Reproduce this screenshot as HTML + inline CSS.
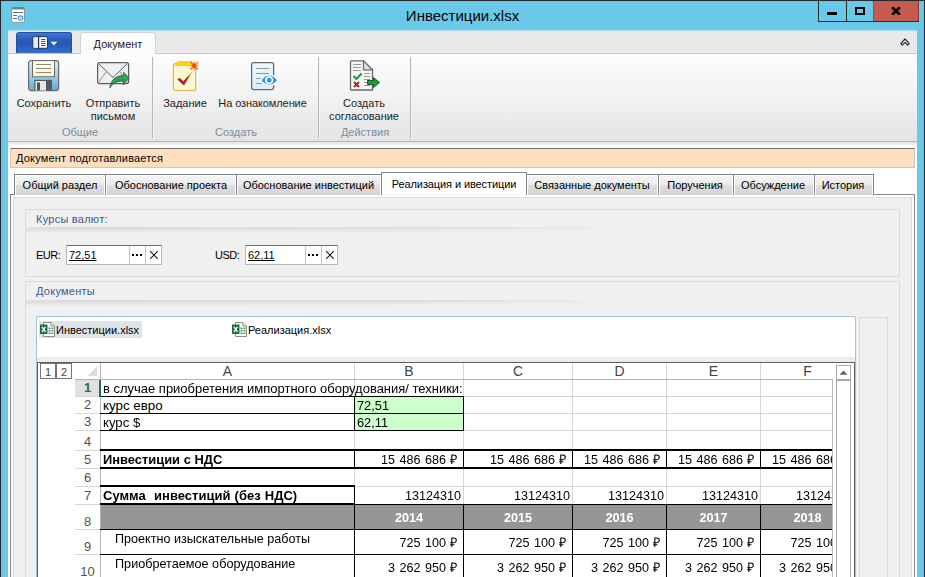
<!DOCTYPE html>
<html lang="ru">
<head>
<meta charset="utf-8">
<title>Инвестиции.xlsx</title>
<style>
*{box-sizing:border-box;margin:0;padding:0}
html,body{width:925px;height:577px;overflow:hidden}
body{position:relative;background:#6ac9e9;font-family:"Liberation Sans",sans-serif;font-size:11px;color:#1e1e1e}
.abs{position:absolute}
#frameT{left:0;top:0;width:925px;height:1px;background:#23282c}
#frameL{left:0;top:0;width:1px;height:577px;background:#23282c}
#frameR{left:924px;top:0;width:1px;height:577px;background:#23282c}
#title{left:0;top:6px;width:925px;text-align:center;font-size:15px;line-height:20px;color:#000}
#ctl{left:818px;top:0;height:22px;width:101px;border:1px solid #2b2b2b;border-top:none;border-right:none;display:flex}
#ctl div{height:21px;position:relative}
#client{left:8px;top:31px;width:909px;height:546px;background:#fff;overflow:hidden}
#tabstrip{left:0;top:0;width:909px;height:23px;background:#e9e9e9;border-bottom:1px solid #c6c6c6}
#appbtn{left:8px;top:1px;width:56px;height:21px;border-radius:3px 3px 0 0;background:linear-gradient(#4377d3,#2c5fbc 30%,#2858b6 55%,#3570cc);border:1px solid #2450a4;border-bottom:none}
#doctab{left:72px;top:1px;width:76px;height:23px;background:#fbfbfb;border:1px solid #d2d2d2;border-bottom:none;border-radius:3px 3px 0 0;text-align:center;line-height:22px}
#ribbon{left:0;top:23px;width:909px;height:88px;background:linear-gradient(#fdfdfd,#f3f3f3 45%,#e4e4e4);border-bottom:1px solid #b6b6b6}
#ribsh{left:0;top:111px;width:909px;height:4px;background:linear-gradient(#e2e2e2,#fff)}
.rsep{top:3px;width:1px;height:81px;background:#b8b8b8;box-shadow:1px 0 0 #f4f4f4}
.rbtn{top:43px;text-align:center;line-height:13px;white-space:nowrap;transform:translateX(-50%)}
.rgrp{top:72px;color:#7c8da5;transform:translateX(-50%);white-space:nowrap;line-height:13px}

#status{left:10px;top:148px;width:905px;height:20px;background:#fddfc0;border:1px solid #c8c8c8;border-top-color:#707070;line-height:18px;padding-left:5px;color:#000;letter-spacing:.17px}
.tab{top:174px;height:21px;border:1px solid #84848c;border-bottom:none;background:linear-gradient(#f5f5f5,#ececec 47%,#dedede 53%,#d4d4d4);box-shadow:inset 1px 1px 0 #fff,inset -1px 0 0 #fff;line-height:21px;text-align:center;white-space:nowrap;color:#000}
.tab.act{top:172px;height:23px;background:#fff;line-height:23px;z-index:3;box-shadow:none}
#panel{left:10px;top:194px;width:905px;height:400px;border:1px solid #85858d;background:#fff}
#panel2{left:13px;top:197px;width:899px;height:400px;border:1px solid #d3dde6;background:#f0f0f0}
.gbox{left:25px;width:875px;border:1px solid #d4dde4;background:#f0f0f0}
.ghead{left:36px;color:#3b5a8c;line-height:13px;letter-spacing:.25px}
.gline{left:26px;width:873px;height:1px;background:linear-gradient(90deg,rgba(218,218,218,.4),#dadada 4%,#dcdcdc 50%,rgba(225,225,225,0) 70%)}
.gshadow{left:26px;width:873px;height:5px;background:linear-gradient(90deg,rgba(0,0,0,.09),rgba(0,0,0,.06) 45%,rgba(0,0,0,0) 68%);-webkit-mask-image:linear-gradient(#000,transparent);mask-image:linear-gradient(#000,transparent)}
.tbox{top:245px;height:20px;background:#fff;border:1px solid #b9b9b9;border-top-color:#6e6e6e}
.tbox .v{left:2px;top:2px;line-height:14px;text-decoration:underline;color:#000}
.tbox .b1,.tbox .b2{top:0;width:16px;height:18px;border-left:1px solid #c4c4c4}
.tbox .b1{right:16px}.tbox .b2{right:0}
.dot{top:8px;width:2px;height:2px;background:#000}

#flist{left:36px;top:316px;width:820px;height:300px;background:#fff;border:1px solid #a6c0da;border-bottom:none;border-radius:2px 2px 0 0}
#fgap{left:37px;top:357px;width:818px;height:5px;background:#ececec}
#fsel{left:39px;top:321px;width:103px;height:17px;background:#dfe3ea}
.fname{top:323px;line-height:14px;color:#000;white-space:nowrap}
#side{left:859px;top:317px;width:29px;height:270px;border:1px solid #d3dde6;background:#f0f0f0}
#sheetbg{left:37px;top:362px;width:818px;height:230px;background:#fff;border:1px solid #5e5e5e}
#sheet{left:0;top:0;width:925px;height:577px;font-family:"Liberation Sans",sans-serif}
#grid{left:0;top:0;width:832px;height:577px;overflow:hidden}
.ch{height:16px;line-height:16px;text-align:center;font-size:14px;color:#444}
.rh{font-size:13px;color:#505050;text-align:center}
.rh span{position:absolute;left:0;width:25px;bottom:0;line-height:16px}
.rh.sel{background:#e1e1e1;color:#217346;font-weight:bold}
.c{font-size:13.33px;line-height:15px;color:#000;white-space:nowrap;transform-origin:0 0}
.c.b{font-weight:bold}
.c.n{word-spacing:1px}
.c.r{text-align:right;transform-origin:100% 0}
.c.ctr{text-align:center;transform-origin:50% 0}
.c.w{color:#fff}
.ob{width:16px;height:16px;border:1px solid #6e7482;background:#fff;font-size:11px;line-height:14px;padding-top:1px;text-align:center;color:#444}
</style>
</head>
<body>
<div class="abs" id="title">Инвестиции.xlsx</div>
<div class="abs" id="ctl">
  <div style="width:28px;border-right:1px solid #2b2b2b"><span class="abs" style="left:8px;top:12px;width:10px;height:3px;background:#000"></span></div>
  <div style="width:26px"><span class="abs" style="left:8px;top:7px;width:10px;height:8px;border:2px solid #000"></span></div>
  <div style="width:46px;background:#c65a4f;box-shadow:inset -1px 0 0 #8a382f,inset 1px 0 0 #a8483e;text-align:center;font-weight:bold;font-size:14px;line-height:20px;color:#000"><svg class="abs" style="left:18px;top:7px" width="10" height="8" viewBox="0 0 10 8"><path d="M1.200 0.300L8.800 7.700M8.800 0.300L1.200 7.700" stroke="#000" stroke-width="2.700"/></svg></div>
</div>
<div class="abs" style="left:8px;top:30px;width:909px;height:1px;background:#a9d9ea"></div>
<div class="abs" id="client">
  <div class="abs" id="tabstrip"></div>
  <svg class="abs" style="left:891px;top:6px" width="12" height="10" viewBox="0 0 12 10"><path d="M1.900 6.600L6 2L10.100 6.600L8.700 8.100L6 5.400L3.300 8.100Z" fill="#fff" stroke="#262626" stroke-width="1.200" stroke-linejoin="round"/></svg>
  <div class="abs" id="appbtn"></div>
  <div class="abs" id="doctab">Документ</div>
  <div class="abs" id="ribsh"></div>
  <div class="abs" id="ribbon">
    <div class="abs rsep" style="left:144px"></div>
    <div class="abs rsep" style="left:310px"></div>
    <div class="abs rsep" style="left:402px"></div>
    <div class="abs rbtn" style="left:36px">Сохранить</div>
    <div class="abs rbtn" style="left:105px">Отправить<br>письмом</div>
    <div class="abs rbtn" style="left:177px">Задание</div>
    <div class="abs rbtn" style="left:254.500px;letter-spacing:-.1px">На ознакомление</div>
    <div class="abs rbtn" style="left:356px">Создать<br>согласование</div>
    <div class="abs rgrp" style="left:72px">Общие</div>
    <div class="abs rgrp" style="left:228px">Создать</div>
    <div class="abs rgrp" style="left:357px">Действия</div>
  </div>
</div>

<!--ICONS-->
<!-- title icon -->
<svg class="abs" style="left:11px;top:7px" width="14" height="16" viewBox="0 0 14 16">
  <rect x="0.5" y="0.5" width="13" height="15" rx="1.5" fill="#fff" stroke="#8a9aa0"/>
  <rect x="1" y="0" width="12" height="2.5" fill="#6f8388"/>
  <rect x="2" y="5" width="10" height="1" fill="#5d7075"/>
  <rect x="2" y="8" width="4" height="1" fill="#5d7075"/>
  <rect x="2" y="11" width="4" height="1" fill="#5d7075"/>
  <circle cx="9.5" cy="11" r="2.2" fill="#d8ecff" stroke="#4a9cf5" stroke-width="1.2"/>
</svg>
<!-- app button icon -->
<svg class="abs" style="left:32px;top:36px" width="26" height="13" viewBox="0 0 26 13">
  <rect x="1" y="0.700" width="14.500" height="11.600" rx="1.500" fill="#fff" stroke="#1d3566" stroke-width="1"/>
  <rect x="1.600" y="1.300" width="4.400" height="10.400" fill="#e9e9e9"/>
  <rect x="6" y="0.700" width="1.200" height="11.600" fill="#26334d"/>
  <rect x="9" y="3" width="4.500" height="1" fill="#555"/><rect x="9" y="5" width="4.500" height="1" fill="#555"/><rect x="9" y="7" width="4.500" height="1" fill="#555"/><rect x="9" y="9" width="4.500" height="1" fill="#555"/>
  <path d="M18.500 5.700h6.800l-3.400 3.900z" fill="#fff"/>
</svg>
<!-- save (floppy) -->
<svg class="abs" style="left:28px;top:60px" width="32" height="32" viewBox="0 0 32 32">
  <defs><linearGradient id="fl" x1="0" y1="0" x2="0" y2="1"><stop offset="0" stop-color="#dff0f8"/><stop offset=".5" stop-color="#9fd2ec"/><stop offset="1" stop-color="#5fabd6"/></linearGradient>
  <linearGradient id="lb" x1="0" y1="0" x2="0" y2="1"><stop offset="0" stop-color="#fffef0"/><stop offset="1" stop-color="#fdf6b8"/></linearGradient></defs>
  <rect x="0.6" y="0.6" width="30" height="30" rx="2.5" fill="url(#fl)" stroke="#6b6b6b" stroke-width="1.2"/>
  <rect x="4.5" y="0.6" width="22" height="16.2" fill="url(#lb)" stroke="#6b6b6b" stroke-width="1"/>
  <rect x="8" y="4" width="15" height="1" fill="#8a8a8a"/><rect x="8" y="8" width="15" height="1" fill="#8a8a8a"/><rect x="8" y="12" width="15" height="1" fill="#8a8a8a"/>
  <rect x="6.300" y="19.800" width="17.700" height="10.700" fill="#5a5a5a"/>
  <rect x="7.500" y="21" width="10.500" height="9.500" fill="#e6e9ea"/>
  <rect x="9" y="22.5" width="3" height="8" fill="#555"/>
</svg>
<!-- envelope + arrow -->
<svg class="abs" style="left:96px;top:61px" width="36" height="28" viewBox="0 0 36 28">
  <rect x="1.6" y="1.6" width="31" height="21" rx="2" fill="#efefef" stroke="#5c5c5c" stroke-width="1.2"/>
  <path d="M2.500 21.500L10 11M31.500 21.500L24 11" stroke="#777" stroke-width=".8" fill="none"/>
  <path d="M2.500 2.500L17 16.500L31.500 2.500" stroke="#666" stroke-width="1" fill="none"/>
  <path d="M13.800 27.200C14.300 19.500 19.500 14.600 27.400 14.400L27.500 11.300L33.300 16.800L27.100 23.800L27.200 20.200C21 20 16.500 22.300 13.800 27.200Z" fill="#2f8f5a" stroke="#1f6f48" stroke-width=".8" stroke-linejoin="round"/>
  <path d="M17 21.500C19.500 18 23.500 16.800 28.600 17L28.700 14.800L31.200 17L28.600 20" fill="none" stroke="#35b04f" stroke-width="1.300" opacity=".75"/>
</svg>
<!-- task -->
<svg class="abs" style="left:172px;top:60px" width="28" height="32" viewBox="0 0 28 32">
  <defs><linearGradient id="ck" x1="0" y1="1" x2="1" y2="0"><stop offset="0" stop-color="#b01f28"/><stop offset=".6" stop-color="#b3242c"/><stop offset="1" stop-color="#e9a070"/></linearGradient></defs>
  <rect x="1.400" y="3.500" width="22.300" height="27" rx="2" fill="#fdf6d3" stroke="#d9b94c" stroke-width="1.200"/>
  <path d="M3.500 4.500L5.500 1.500H19.500L21.500 4.500V5.500H3.500Z" fill="#ffd21a" stroke="#e0b830" stroke-width=".6"/>
  <path d="M5.300 19.600L7.600 17.800L11.300 21.300L20.600 11.300L12 25.600Z" fill="url(#ck)"/>
  <g stroke="#ff7a00" stroke-width="1.700" stroke-linecap="round"><path d="M19 2.500L25.400 8.900M25.400 2.500L19 8.900"/></g>
  <g stroke="#ff8a10" stroke-width="1.200"><path d="M22.200 1.500V9.900M18 5.700H26.400"/></g>
  <circle cx="22.200" cy="5.700" r="2" fill="#ff3c00"/>
</svg>
<!-- doc with eye -->
<svg class="abs" style="left:250px;top:61px" width="30" height="30" viewBox="0 0 30 30">
  <defs><linearGradient id="dg" x1="0" y1="0" x2="0" y2="1"><stop offset="0" stop-color="#eef8fd"/><stop offset="1" stop-color="#d9eefa"/></linearGradient></defs>
  <rect x="1.600" y="1.600" width="22" height="27" rx="2" fill="url(#dg)" stroke="#6a6a6a" stroke-width="1.300"/>
  <rect x="6" y="7" width="13" height="1" fill="#8e9a9a"/><rect x="6" y="12" width="13" height="1" fill="#8e9a9a"/><rect x="6" y="17" width="6" height="1" fill="#8e9a9a"/><rect x="6" y="22" width="6" height="1" fill="#8e9a9a"/>
  <path d="M10.300 19.200Q19.200 8.400 28.100 19.200Q19.200 30 10.300 19.200Z" fill="#2f97ea" stroke="#fff" stroke-width="1.500"/>
  <circle cx="19.200" cy="19.200" r="3.300" fill="#2f97ea" stroke="#fff" stroke-width="1.700"/>
</svg>
<!-- approval -->
<svg class="abs" style="left:349px;top:59px" width="32" height="33" viewBox="0 0 32 33">
  <path d="M2.500 1.800H14.500L23.500 10.800V31H2.500Q1.500 31 1.500 30V2.800Q1.500 1.800 2.500 1.800Z" fill="#f6f6f6" stroke="#6a6a6a" stroke-width="1.300"/>
  <path d="M14.500 1.800V10.800H23.500Z" fill="#e4e4e4" stroke="#6a6a6a" stroke-width="1.200" stroke-linejoin="round"/>
  <g fill="#9a9a9a"><rect x="4" y="5" width="8" height="1"/><rect x="4" y="8" width="8" height="1"/><rect x="4" y="11" width="8" height="1"/>
  <rect x="15" y="14" width="6" height="1"/><rect x="15" y="17" width="6" height="1"/><rect x="15" y="20" width="6" height="1"/><rect x="15" y="23" width="6" height="1"/><rect x="15" y="26" width="6" height="1"/></g>
  <path d="M4.500 17L7.500 20L12.500 14.500" stroke="#1c9a48" stroke-width="2" fill="none"/>
  <path d="M5 23L10 28M10 23L5 28" stroke="#a32626" stroke-width="2" fill="none"/>
  <path d="M18.500 21.500H24.500V18.500L30.500 23.500L24.500 28.500V25.500H18.500Z" fill="#1f9a3a" stroke="#0b5f1c" stroke-width="1"/>
</svg>
<!--/ICONS-->
<div class="abs" id="status">Документ подготавливается</div>
<div class="abs" id="panel"></div><div class="abs" id="panel2"></div>
<div class="abs tab" style="left:14px;width:92px">Общий раздел</div>
<div class="abs tab" style="left:105px;width:132px">Обоснование проекта</div>
<div class="abs tab" style="left:236px;width:146px;padding-right:1px">Обоснование инвестиций</div>
<div class="abs tab act" style="left:381px;width:146px;letter-spacing:-.1px">Реализация и ивестиции</div>
<div class="abs tab" style="left:526px;width:133px;padding-right:1px">Связанные документы</div>
<div class="abs tab" style="left:658px;width:76px;padding-right:2px">Поручения</div>
<div class="abs tab" style="left:733px;width:82px;padding-right:2px">Обсуждение</div>
<div class="abs tab" style="left:814px;width:60px;padding-right:2px">История</div>

<div class="abs gbox" style="top:209px;height:68px"></div>
<div class="abs ghead" style="top:213px">Курсы валют:</div>
<div class="abs gline" style="top:227px"></div>
<div class="abs gshadow" style="top:228px"></div>
<div class="abs" style="left:36px;top:248px;line-height:14px;color:#000;letter-spacing:-.5px">EUR:</div>
<div class="abs tbox" style="left:66px;width:96px"><span class="abs v">72,51</span><span class="abs b1"><i class="abs dot" style="left:2px"></i><i class="abs dot" style="left:6px"></i><i class="abs dot" style="left:10px"></i></span><span class="abs b2"><svg class="abs" style="left:3px;top:4px" width="10" height="10" viewBox="0 0 10 10"><path d="M1.200 1.200L8.800 8.800M8.800 1.200L1.200 8.800" stroke="#111" stroke-width="1.050"/></svg></span></div>
<div class="abs" style="left:215px;top:248px;line-height:14px;color:#000;letter-spacing:-.5px">USD:</div>
<div class="abs tbox" style="left:245px;width:93px"><span class="abs v">62,11</span><span class="abs b1"><i class="abs dot" style="left:2px"></i><i class="abs dot" style="left:6px"></i><i class="abs dot" style="left:10px"></i></span><span class="abs b2"><svg class="abs" style="left:3px;top:4px" width="10" height="10" viewBox="0 0 10 10"><path d="M1.200 1.200L8.800 8.800M8.800 1.200L1.200 8.800" stroke="#111" stroke-width="1.050"/></svg></span></div>

<div class="abs gbox" style="top:281px;height:320px"></div>
<div class="abs ghead" style="top:285px">Документы</div>
<div class="abs gline" style="top:300px"></div>
<div class="abs gshadow" style="top:301px"></div>

<div class="abs" id="flist"></div><div class="abs" id="fgap"></div>
<div class="abs" id="fsel"></div>
<svg class="abs" style="left:40px;top:322px" width="16" height="16" viewBox="0 0 16 16"><path d="M3.500 .5H11L14.500 4V14.500H3.500Z" fill="#fff" stroke="#8c8c8c"/><path d="M11 .5V4H14.500" fill="#f0f0f0" stroke="#8c8c8c"/><g fill="#3f9c5c"><rect x="8.500" y="5.500" width="2" height="1.500"/><rect x="11.500" y="5.500" width="2" height="1.500"/><rect x="8.500" y="8" width="2" height="1.500"/><rect x="11.500" y="8" width="2" height="1.500"/><rect x="8.500" y="10.500" width="2" height="1.500"/><rect x="11.500" y="10.500" width="2" height="1.500"/></g><rect x="0" y="2.500" width="7.500" height="9.500" fill="#1e7145"/><path d="M2 4.800L5.500 9.800M5.500 4.800L2 9.800" stroke="#fff" stroke-width="1.300"/></svg>
<div class="abs fname" style="left:56px">Инвестиции.xlsx</div>
<svg class="abs" style="left:232px;top:322px" width="16" height="16" viewBox="0 0 16 16"><path d="M3.500 .5H11L14.500 4V14.500H3.500Z" fill="#fff" stroke="#8c8c8c"/><path d="M11 .5V4H14.500" fill="#f0f0f0" stroke="#8c8c8c"/><g fill="#3f9c5c"><rect x="8.500" y="5.500" width="2" height="1.500"/><rect x="11.500" y="5.500" width="2" height="1.500"/><rect x="8.500" y="8" width="2" height="1.500"/><rect x="11.500" y="8" width="2" height="1.500"/><rect x="8.500" y="10.500" width="2" height="1.500"/><rect x="11.500" y="10.500" width="2" height="1.500"/></g><rect x="0" y="2.500" width="7.500" height="9.500" fill="#1e7145"/><path d="M2 4.800L5.500 9.800M5.500 4.800L2 9.800" stroke="#fff" stroke-width="1.300"/></svg>
<div class="abs fname" style="left:248px">Реализация.xlsx</div>
<div class="abs" id="side"></div>
<div class="abs" id="sheetbg"></div>
<!--SHEET-->
<div class="abs" id="sheet">
<div class="abs" id="grid">
<div class="abs" style="left:354px;top:363px;width:1px;height:220px;background:#d6d6d6"></div>
<div class="abs" style="left:463px;top:363px;width:1px;height:220px;background:#d6d6d6"></div>
<div class="abs" style="left:572px;top:363px;width:1px;height:220px;background:#d6d6d6"></div>
<div class="abs" style="left:666px;top:363px;width:1px;height:220px;background:#d6d6d6"></div>
<div class="abs" style="left:760px;top:363px;width:1px;height:220px;background:#d6d6d6"></div>
<div class="abs" style="left:854px;top:363px;width:1px;height:220px;background:#d6d6d6"></div>
<div class="abs" style="left:75px;top:379px;width:780px;height:1px;background:#d6d6d6"></div>
<div class="abs" style="left:75px;top:396px;width:780px;height:1px;background:#d6d6d6"></div>
<div class="abs" style="left:75px;top:413px;width:780px;height:1px;background:#d6d6d6"></div>
<div class="abs" style="left:75px;top:430px;width:780px;height:1px;background:#d6d6d6"></div>
<div class="abs" style="left:75px;top:450px;width:780px;height:1px;background:#d6d6d6"></div>
<div class="abs" style="left:75px;top:468px;width:780px;height:1px;background:#d6d6d6"></div>
<div class="abs" style="left:75px;top:486px;width:780px;height:1px;background:#d6d6d6"></div>
<div class="abs" style="left:75px;top:504px;width:780px;height:1px;background:#d6d6d6"></div>
<div class="abs" style="left:75px;top:529px;width:780px;height:1px;background:#d6d6d6"></div>
<div class="abs" style="left:75px;top:554px;width:780px;height:1px;background:#d6d6d6"></div>
<div class="abs" style="left:75px;top:579px;width:780px;height:1px;background:#d6d6d6"></div>
<div class="abs" style="left:75px;top:379px;width:780px;height:1px;background:#b2b2b2"></div>
<div class="abs" style="left:100px;top:363px;width:1px;height:220px;background:#b4b4b4"></div>
<div class="abs ch" style="left:101px;top:363px;width:253px">A</div>
<div class="abs ch" style="left:355px;top:363px;width:108px">B</div>
<div class="abs ch" style="left:464px;top:363px;width:108px">C</div>
<div class="abs ch" style="left:573px;top:363px;width:93px">D</div>
<div class="abs ch" style="left:667px;top:363px;width:93px">E</div>
<div class="abs ch" style="left:761px;top:363px;width:93px">F</div>
<div class="abs rh sel" style="left:75px;top:380px;width:25px;height:16px"><span>1</span></div>
<div class="abs rh" style="left:75px;top:397px;width:25px;height:16px"><span>2</span></div>
<div class="abs rh" style="left:75px;top:414px;width:25px;height:16px"><span>3</span></div>
<div class="abs rh" style="left:75px;top:431px;width:25px;height:19px"><span>4</span></div>
<div class="abs rh" style="left:75px;top:451px;width:25px;height:17px"><span>5</span></div>
<div class="abs rh" style="left:75px;top:469px;width:25px;height:17px"><span>6</span></div>
<div class="abs rh" style="left:75px;top:487px;width:25px;height:17px"><span>7</span></div>
<div class="abs rh" style="left:75px;top:505px;width:25px;height:24px"><span style="bottom:-1px">8</span></div>
<div class="abs rh" style="left:75px;top:530px;width:25px;height:24px"><span style="bottom:-1px">9</span></div>
<div class="abs rh" style="left:75px;top:555px;width:25px;height:24px"><span style="bottom:-1px">10</span></div>
<svg class="abs" style="left:87px;top:366px" width="11" height="11" viewBox="0 0 11 11"><path d="M10 0.5V10H0.5Z" fill="#dcdcdc"/></svg>
<div class="abs" style="left:101px;top:505px;width:254px;height:24px;background:#969696"></div>
<div class="abs" style="left:355px;top:504px;width:500px;height:25px;background:#969696"></div>
<div class="abs" style="left:355px;top:397px;width:108px;height:33px;background:#ccffcc"></div>
<div class="abs" style="left:100px;top:396px;width:364px;height:1px;background:#000"></div>
<div class="abs" style="left:100px;top:413px;width:364px;height:1px;background:#000"></div>
<div class="abs" style="left:100px;top:430px;width:364px;height:1px;background:#000"></div>
<div class="abs" style="left:99px;top:380px;width:2px;height:17px;background:#217346"></div>
<div class="abs" style="left:354px;top:397px;width:1px;height:34px;background:#000"></div>
<div class="abs" style="left:463px;top:397px;width:1px;height:34px;background:#000"></div>
<div class="abs" style="left:100px;top:449px;width:760px;height:2px;background:#000"></div>
<div class="abs" style="left:100px;top:467px;width:760px;height:2px;background:#000"></div>
<div class="abs" style="left:354px;top:449px;width:1px;height:20px;background:#000"></div>
<div class="abs" style="left:463px;top:449px;width:1px;height:20px;background:#000"></div>
<div class="abs" style="left:572px;top:449px;width:1px;height:20px;background:#000"></div>
<div class="abs" style="left:666px;top:449px;width:1px;height:20px;background:#000"></div>
<div class="abs" style="left:760px;top:449px;width:1px;height:20px;background:#000"></div>
<div class="abs" style="left:854px;top:449px;width:1px;height:20px;background:#000"></div>
<div class="abs" style="left:100px;top:485px;width:255px;height:2px;background:#000"></div>
<div class="abs" style="left:100px;top:503px;width:255px;height:2px;background:#000"></div>
<div class="abs" style="left:354px;top:485px;width:1px;height:20px;background:#000"></div>
<div class="abs" style="left:354px;top:504px;width:1px;height:80px;background:#000"></div>
<div class="abs" style="left:463px;top:504px;width:1px;height:80px;background:#000"></div>
<div class="abs" style="left:572px;top:504px;width:1px;height:80px;background:#000"></div>
<div class="abs" style="left:666px;top:504px;width:1px;height:80px;background:#000"></div>
<div class="abs" style="left:760px;top:504px;width:1px;height:80px;background:#000"></div>
<div class="abs" style="left:854px;top:504px;width:1px;height:80px;background:#000"></div>
<div class="abs" style="left:355px;top:504px;width:500px;height:1px;background:#000"></div>
<div class="abs" style="left:100px;top:529px;width:760px;height:1px;background:#000"></div>
<div class="abs" style="left:100px;top:554px;width:760px;height:1px;background:#000"></div>
<div class="abs c " style="left:103px;top:381px;width:400px;transform:scaleX(0.974);">в случае приобретения импортного оборудования/ техники:</div>
<div class="abs c " style="left:103px;top:398px;width:250px;">курс евро</div>
<div class="abs c " style="left:103px;top:415px;width:250px;transform:scaleX(0.99);">курс $</div>
<div class="abs c " style="left:357px;top:398px;width:100px;transform:scaleX(0.96);">72,51</div>
<div class="abs c " style="left:357px;top:415px;width:100px;transform:scaleX(0.96);">62,11</div>
<div class="abs c b" style="left:103px;top:452px;width:250px;transform:scaleX(0.968);">Инвестиции с НДС</div>
<div class="abs c b" style="left:103px;top:488px;width:250px;transform:scaleX(0.975);word-spacing:.6px;">Сумма&nbsp; инвестиций (без НДС)</div>
<div class="abs c " style="left:115px;top:531px;width:240px;transform:scaleX(0.945);">Проектно изыскательные работы</div>
<div class="abs c " style="left:115px;top:556px;width:240px;transform:scaleX(0.949);">Приобретаемое оборудование</div>
<div class="abs c r n" style="left:355px;top:452px;width:103px;transform:scaleX(0.945);">15 486 686 ₽</div>
<div class="abs c r n" style="left:355px;top:488px;width:106px;transform:scaleX(0.945);">13124310</div>
<div class="abs c b ctr w" style="left:355px;top:510px;width:108px;transform:scaleX(0.95);">2014</div>
<div class="abs c r n" style="left:355px;top:535px;width:103px;transform:scaleX(0.945);">725 100 ₽</div>
<div class="abs c r n" style="left:355px;top:560px;width:103px;transform:scaleX(0.945);">3 262 950 ₽</div>
<div class="abs c r n" style="left:464px;top:452px;width:103px;transform:scaleX(0.945);">15 486 686 ₽</div>
<div class="abs c r n" style="left:464px;top:488px;width:106px;transform:scaleX(0.945);">13124310</div>
<div class="abs c b ctr w" style="left:464px;top:510px;width:108px;transform:scaleX(0.95);">2015</div>
<div class="abs c r n" style="left:464px;top:535px;width:103px;transform:scaleX(0.945);">725 100 ₽</div>
<div class="abs c r n" style="left:464px;top:560px;width:103px;transform:scaleX(0.945);">3 262 950 ₽</div>
<div class="abs c r n" style="left:573px;top:452px;width:88px;transform:scaleX(0.945);">15 486 686 ₽</div>
<div class="abs c r n" style="left:573px;top:488px;width:91px;transform:scaleX(0.945);">13124310</div>
<div class="abs c b ctr w" style="left:573px;top:510px;width:93px;transform:scaleX(0.95);">2016</div>
<div class="abs c r n" style="left:573px;top:535px;width:88px;transform:scaleX(0.945);">725 100 ₽</div>
<div class="abs c r n" style="left:573px;top:560px;width:88px;transform:scaleX(0.945);">3 262 950 ₽</div>
<div class="abs c r n" style="left:667px;top:452px;width:88px;transform:scaleX(0.945);">15 486 686 ₽</div>
<div class="abs c r n" style="left:667px;top:488px;width:91px;transform:scaleX(0.945);">13124310</div>
<div class="abs c b ctr w" style="left:667px;top:510px;width:93px;transform:scaleX(0.95);">2017</div>
<div class="abs c r n" style="left:667px;top:535px;width:88px;transform:scaleX(0.945);">725 100 ₽</div>
<div class="abs c r n" style="left:667px;top:560px;width:88px;transform:scaleX(0.945);">3 262 950 ₽</div>
<div class="abs c r n" style="left:761px;top:452px;width:88px;transform:scaleX(0.945);">15 486 686 ₽</div>
<div class="abs c r n" style="left:761px;top:488px;width:91px;transform:scaleX(0.945);">13124310</div>
<div class="abs c b ctr w" style="left:761px;top:510px;width:93px;transform:scaleX(0.95);">2018</div>
<div class="abs c r n" style="left:761px;top:535px;width:88px;transform:scaleX(0.945);">725 100 ₽</div>
<div class="abs c r n" style="left:761px;top:560px;width:88px;transform:scaleX(0.945);">3 262 950 ₽</div>
</div>
<div class="abs ob" style="left:40px;top:363px">1</div><div class="abs ob" style="left:56px;top:363px">2</div>
<div class="abs" style="left:832px;top:379px;width:1px;height:220px;background:#b8b8b8"></div>
<div class="abs" style="left:833px;top:380px;width:21px;height:220px;background:#fff"></div>
<div class="abs" style="left:836px;top:365px;width:15px;height:15px;background:#fff;border:1px solid #a8a8a8"><svg class="abs" style="left:2px;top:4px" width="9" height="5" viewBox="0 0 9 5"><path d="M0.500 4.800L4.500 0.500L8.500 4.800Z" fill="#666"/></svg></div>
<div class="abs" style="left:836px;top:380px;width:15px;height:210px;background:#fff;border:1px solid #a8a8a8"></div>
</div>
<!--/SHEET-->
<div class="abs" id="frameT"></div>
<div class="abs" id="frameL"></div>
<div class="abs" id="frameR"></div>
</body>
</html>
